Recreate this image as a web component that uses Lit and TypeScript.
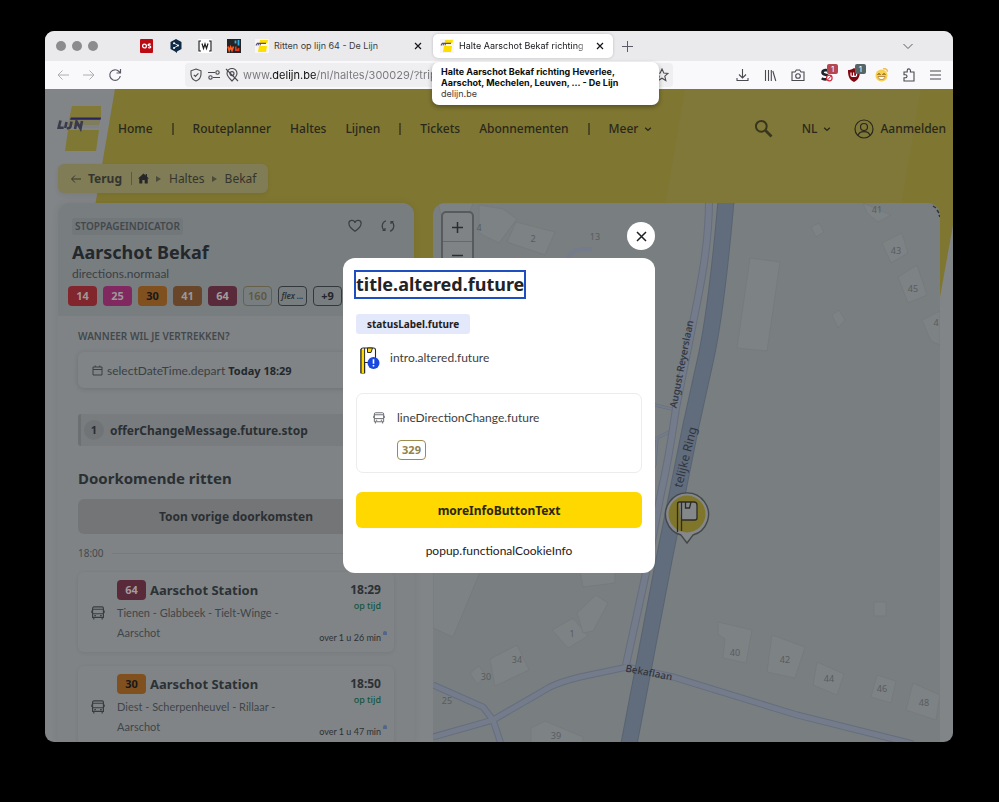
import { LitElement, html, css, svg } from "lit";
import { customElement, property } from "lit/decorators.js";
import { classMap } from "lit/directives/class-map.js";

interface Ride {
  line: string;
  tone: string;
  to: string;
  via: string;
  time: string;
  wait: string;
}

const LINES: { label: string; tone: string }[] = [
  { label: "14", tone: "red" },
  { label: "25", tone: "pink" },
  { label: "30", tone: "orange" },
  { label: "41", tone: "brown" },
  { label: "64", tone: "wine" },
  { label: "160", tone: "sand" },
  { label: "flex ...", tone: "flex" },
  { label: "+9", tone: "more" },
];

const RIDES: Ride[] = [
  { line: "64", tone: "wine", to: "Aarschot Station", via: "Tienen - Glabbeek - Tielt-Winge - Aarschot", time: "18:29", wait: "over 1 u 26 min" },
  { line: "30", tone: "orange", to: "Aarschot Station", via: "Diest - Scherpenheuvel - Rillaar - Aarschot", time: "18:50", wait: "over 1 u 47 min" },
];

const reset = css`
  *, *::before, *::after { box-sizing: border-box; }
  button { font: inherit; color: inherit; background: none; border: 0; padding: 0; margin: 0; cursor: pointer; }
  a { color: inherit; text-decoration: none; }
  h1, h2, h3, p, ul, ol { margin: 0; padding: 0; list-style: none; }
  svg { display: block; flex: none; }
  .light-text { font-family: Lato, "Noto Sans", sans-serif; }
`;

const lineBadge = css`
  .badge {
    display: inline-flex; align-items: center; justify-content: center; flex: none;
    width: 29px; height: 20px; border-radius: 4px; font-size: 11px; line-height: 16px; font-weight: 700;
    border: 1px solid transparent; white-space: nowrap;
  }
  .red { background: #82262d; color: #9b9899; }
  .pink { background: #822860; color: #9b9899; }
  .orange { background: #81501f; color: #17181a; }
  .brown { background: #694629; color: #9b9899; }
  .wine { background: #592a3a; color: #a09c9e; }
  .sand { border-color: #68614a; color: #5f583c; font-weight: 600; }
  .flex { border-color: #33383d; color: #2d3237; font-size: 8px; font-style: italic; font-weight: 600; }
  .more { border-color: #33383d; color: #23272b; }
  .olive { border-color: #9c8c4e; color: #92834a; }
`;

const busIcon = (size: number) => svg`
  <svg width=${size} height=${size} viewBox="0 0 16 16" fill="none" stroke="currentColor" stroke-width="1.3" aria-hidden="true">
    <path d="M3.4 1h9.2a1.6 1.6 0 0 1 1.6 1.6V13H1.8V2.600A1.600 1.600 0 0 1 3.400 1zM1.800 3.700h12.400M1.800 8.800h12.400M3.200 13v2.300M12.800 13v2.300M1 5v3M15 5v3"/>
    <path d="M3.800 11h1.800M10.400 11h1.800" stroke-width="1.600"/>
  </svg>`;

const chevron = svg`
  <svg width="8" height="8" viewBox="0 0 8 8" fill="none" stroke="currentColor" stroke-width="1.400" aria-hidden="true"><path d="M1.200 2.800 4 5.400l2.800-2.600"/></svg>`;

const lijnIcon = svg`
  <svg width="14" height="14" viewBox="0 0 14 14" aria-hidden="true">
    <rect width="14" height="14" fill="#f7f5f6"/>
    <path d="M5 1h8l-.6 3H4.600zM4 7h8l-1 6H3z" fill="#ffdf00"/>
    <path d="M1 6.400 2 4.600M3 6.400l.6-1.800M5 6.400l.5-1.800M2 4.400h9" stroke="#544e7c" stroke-width="1.100"/>
  </svg>`;

@customElement("browser-chrome")
export class BrowserChrome extends LitElement {
  static styles = [reset, css`
    :host { display: block; position: relative; z-index: 3; font: 400 9px/12px Inter, "Liberation Sans", sans-serif; color: #3c3c40; }
    .tabs { display: flex; align-items: center; height: 30px; background: #eaeaed; padding: 0 39px 0 11px; }
    .lights { display: flex; gap: 6px; margin-right: 34px; }
    .light { width: 10px; height: 10px; border-radius: 50%; background: #8c8c8e; }
    .pin { width: 29px; height: 24px; display: grid; place-items: center; }
    .tab { position: relative; display: flex; align-items: center; gap: 5px; height: 24px; padding: 0 7px; border-radius: 5px; flex: 0 1 183px; min-width: 0; font-size: 9px; }
    .tab.active { background: #fff; color: #15141a; flex-basis: 180px; margin-left: 2px; box-shadow: 0 0 3px #0003; }
    .title { flex: 1; min-width: 0; white-space: nowrap; overflow: hidden; }
    .active .title { mask-image: linear-gradient(to right, #000 90%, #0000); }
    .close { width: 12px; height: 12px; display: grid; place-items: center; color: #15141a; }
    .plus { margin-left: 9px; }
    .list { margin-left: auto; }
    .tip { position: absolute; top: 28px; left: -1px; width: 227px; padding: 4px 9px 6px; border-radius: 7px; background: #fff; box-shadow: 0 2px 5px #0005; line-height: 11px; color: #3c3c40; font-size: 9px; }
    .tip strong { display: block; color: #0c0c0d; font-weight: 700; }
    .bar { display: flex; align-items: center; height: 28px; background: #f9f9fb; padding: 0 12px 0 11px; gap: 12px; }
    .nav { display: flex; gap: 12px; color: #5b5b66; }
    .off { color: #aeaeb3; }
    .url { display: flex; align-items: center; gap: 4px; height: 24px; background: #efeff1; border-radius: 4px; padding: 0 4px; margin-left: 51px; flex: 0 1 488px; min-width: 0; color: #4a4a50; }
    .address {
      flex: 1; min-width: 0; border: 0; outline: 0; padding: 0; margin: 0 4px 0 0; font: 400 11px/16px Inter, "Liberation Sans", sans-serif;
      background: linear-gradient(to right, #77777c 27px, #0c0c0d 27px 73px, #77777c 73px); -webkit-background-clip: text; background-clip: text; color: transparent;
    }
    .tools { display: flex; align-items: center; justify-content: space-between; margin-left: auto; flex: 0 0 205px; color: #4a4a50; }
    .tool { position: relative; display: grid; }
    .count { position: absolute; left: 7px; top: -4px; width: 11px; height: 10px; border-radius: 2px; font-size: 8px; line-height: 10px; text-align: center; color: #fff; background: #b34850; }
    .count.teal { background: #566; }
  `];

  render() {
    const x = svg`<svg width="8" height="8" viewBox="0 0 8 8" stroke="currentColor" stroke-width="1.200"><path d="m1 1 6 6M7 1 1 7"/></svg>`;
    return html`
      <div class="tabs">
        <div class="lights"><i class="light"></i><i class="light"></i><i class="light"></i></div>
        <button class="pin" aria-label="OS"><svg width="14" height="14" viewBox="0 0 14 14"><rect width="13" height="14" rx="1" fill="#bd0b14"/><g fill="none" stroke="#fff" stroke-width="1.300"><circle cx="4.500" cy="7" r="1.900"/><path d="M10.600 5.300c-1-.5-2.500-.4-2.500.6 0 1.200 2.600.8 2.600 2 0 1-1.600 1.200-2.700.6"/></g></svg></button>
        <button class="pin" aria-label="Pakket"><svg width="14" height="14" viewBox="0 0 14 14"><path d="m7 0 5.500 3v7L8 12.500V14l-2-1.500L1.500 10V3z" fill="#0f2b46"/><path d="m5 4 4 2.500L5 9" stroke="#cdd6df" fill="none"/><g fill="#fff"><circle cx="5" cy="4.200" r="1"/><circle cx="9" cy="6.500" r="1"/><circle cx="5" cy="9" r="1"/></g></svg></button>
        <button class="pin" aria-label="W"><svg width="14" height="14" viewBox="0 0 14 14"><rect width="14" height="14" fill="#fff"/><path d="M3 2H1v10h2M11 2h2v10h-2M4 4.500l1.500 5L7 5l1.500 4.500 1.500-5" stroke="#222" fill="none" stroke-width="1.200"/></svg></button>
        <button class="pin" aria-label="WL"><svg width="14" height="14" viewBox="0 0 14 14"><rect width="14" height="14" fill="#222428"/><path d="M1 7.500l1.200 4L3.600 8 5 11.500l1.500-4" stroke="#ff5a1f" stroke-width="1.700" fill="none"/><path d="M8.500 1.500v3M11.500 1v5.500" stroke="#35a7d8" stroke-width="1.800"/><path d="M8.800 7.500v3.700h2.700V9" stroke="#d9381e" stroke-width="1.700" fill="none"/></svg></button>
        <div class="tab">${lijnIcon}<span class="title">Ritten op lijn 64 - De Lijn</span><button class="close" aria-label="Sluiten">${x}</button></div>
        <div class="tab active">${lijnIcon}<span class="title">Halte Aarschot Bekaf richting</span><button class="close" aria-label="Sluiten">${x}</button>
          <div class="tip" role="tooltip"><strong>Halte Aarschot Bekaf richting Heverlee, Aarschot, Mechelen, Leuven, ... - De Lijn</strong>delijn.be</div>
        </div>
        <button class="plus" aria-label="Nieuw tabblad"><svg width="11" height="11" viewBox="0 0 11 11" stroke="#5b5b66"><path d="M5.500 0v11M0 5.500h11"/></svg></button>
        <button class="list" aria-label="Tabbladen"><svg width="12" height="12" viewBox="0 0 12 12" stroke="#5b5b66" fill="none"><path d="m1.500 4 4.500 4.500L10.500 4"/></svg></button>
      </div>
      <div class="bar">
        <div class="nav">
          <button class="off" aria-label="Terug"><svg width="14" height="14" viewBox="0 0 14 14" fill="none" stroke="currentColor"><path d="M13 7H2M6.500 2.500 2 7l4.500 4.500"/></svg></button>
          <button class="off" aria-label="Vooruit"><svg width="14" height="14" viewBox="0 0 14 14" fill="none" stroke="currentColor"><path d="M1 7h11M7.500 2.500 12 7l-4.500 4.500"/></svg></button>
          <button aria-label="Herladen"><svg width="14" height="14" viewBox="0 0 14 14" fill="none" stroke="currentColor" stroke-width="1.200"><path d="M12.300 8A5.300 5.300 0 1 1 11 3.500L12.500 5M12.500 1v4h-4"/></svg></button>
        </div>
        <div class="url">
          <svg width="14" height="14" viewBox="0 0 14 14" fill="none" stroke="currentColor" stroke-width="1.100"><path d="M7 1l5 1.800V6c0 3.500-2 5.800-5 7-3-1.200-5-3.500-5-7V2.800zM4.800 6.800l1.600 1.600 3-3"/></svg>
          <svg width="14" height="14" viewBox="0 0 14 14" fill="none" stroke="currentColor" stroke-width="1.100"><path d="M1 4.500h7M13 9.500H6"/><circle cx="10.500" cy="4.500" r="1.700"/><circle cx="3.500" cy="9.500" r="1.700"/></svg>
          <svg width="14" height="14" viewBox="0 0 14 14" fill="none" stroke="currentColor" stroke-width="1.100"><path d="M7 13C4 10 2 8 2 5.500a5 5 0 0 1 10 0C12 8 10 10 7 13zM1 1l12 12"/><circle cx="7" cy="5.600" r="2"/></svg>
          <input class="address" aria-label="Adres" value="www.delijn.be/nl/haltes/300029/?trip" />
          <svg width="14" height="14" viewBox="0 0 14 14" fill="none" stroke="currentColor" stroke-width="1.100"><path d="m7 1 1.800 4 4.200.4-3.200 2.800 1 4.300L7 10.200 3.200 12.500l1-4.300L1 5.400 5.200 5z"/></svg>
        </div>
        <div class="tools">
          <button class="tool" aria-label="Downloads"><svg width="13" height="13" viewBox="0 0 13 13" fill="none" stroke="currentColor" stroke-width="1.100"><path d="M6.500 0v8.500M3 5.500 6.500 9 10 5.500M1 9v2.500h11V9"/></svg></button>
          <button class="tool" aria-label="Bibliotheek"><svg width="13" height="13" viewBox="0 0 13 13" fill="none" stroke="currentColor" stroke-width="1.100"><path d="M1.500 1v11M4.500 1v11M7.300 1v11M8.800 2l3 10"/></svg></button>
          <button class="tool" aria-label="Schermafbeelding"><svg width="14" height="13" viewBox="0 0 14 13" fill="none" stroke="currentColor" stroke-width="1.100"><path d="M1 3h3l1.300-2h3.400L10 3h3v8.500H1z"/><circle cx="7" cy="7" r="2.300"/></svg></button>
          <button class="tool" aria-label="Scripts"><svg width="13" height="14" viewBox="0 0 13 14" fill="none"><path d="M9 3.200C7.500 1.600 2.500 1.600 2.500 4.500 2.500 7.500 8.500 6 8.500 9c0 2.700-4.500 3-6.700 1.200" stroke="#20232b" stroke-width="2.600"/><circle cx="9.300" cy="10" r="2.800" stroke="#d8263c" fill="#fff" stroke-width="1.200"/><path d="m7.500 12 3.600-4" stroke="#d8263c"/></svg><span class="count">1</span></button>
          <button class="tool" aria-label="Blokkeren"><svg width="12" height="14" viewBox="0 0 12 14"><path d="M6 0c2 1.500 4 2 6 2 0 6-1 9.500-6 12C1 11.500 0 8 0 2c2 0 4-.5 6-2z" fill="#800610"/><path d="M3 4.500v2.800c0 1.500 2.600 1.500 2.600 0V4.500m0 2.800c0 1.500 3 1.500 3 0V5" stroke="#fff" stroke-width="1.200" fill="none"/></svg><span class="count teal">1</span></button>
          <button class="tool" aria-label="Emoji"><svg width="13" height="14" viewBox="0 0 13 14" fill="none"><circle cx="6.500" cy="7.500" r="6" fill="#f9cf4e"/><path d="M8 0.800c3-.5 4.500 1 4.500 3" stroke="#f0bd55" stroke-width="1.500"/><path d="M2.500 6.500q1.500-1.500 3 0M7.500 6.500q1.500-1.500 3 0" stroke="#5d4517"/><path d="M3 8.500h7c0 4-7 4-7 0z" fill="#fff" stroke="#a56b1e" stroke-width=".7"/></svg></button>
          <button class="tool" aria-label="Extensies"><svg width="13" height="14" viewBox="0 0 13 14" fill="none" stroke="currentColor" stroke-width="1.100"><path d="M2 4h3.200V2.500a1.600 1.600 0 0 1 3.200 0V4H12v9H2v-3.200h1.500a1.500 1.500 0 0 0 0-3H2z"/></svg></button>
          <button class="tool" aria-label="Menu"><svg width="11" height="12" viewBox="0 0 11 12" stroke="currentColor" stroke-width="1.100"><path d="M0 2h11M0 6h11M0 10h11"/></svg></button>
        </div>
      </div>`;
  }
}

@customElement("site-header")
export class SiteHeader extends LitElement {
  static styles = [reset, css`
    :host { display: block; color: #29281c; }
    .nav { display: flex; align-items: center; gap: 19px; height: 75px; padding: 4px 7px 0 12px; font-size: 12px; line-height: 16px; font-weight: 500; }
    .logo { margin: 0 -2px 0 0; }
    .sep { width: 2px; height: 12px; background: #4a4722; }
    .drop { display: inline-flex; align-items: center; gap: 6px; }
    .search { margin-left: auto; color: #38361c; }
    .nav .lang { margin: 0 4px 0 10px; }
    .user { display: inline-flex; align-items: center; gap: 6px; }
    .crumbs { display: inline-flex; align-items: center; gap: 7px; height: 29px; margin-left: 13px; padding: 0 12px; border-radius: 6px; background: #807c55; box-shadow: 0 2px 5px #0001; font-size: 12px; line-height: 16px; color: #34352e; }
    .back { display: inline-flex; align-items: center; gap: 6px; font-weight: 700; }
    .rule { width: 1px; height: 13px; background: #5b5940; margin: 0 -1px 0 2px; }
  `];

  render() {
    const arrow = svg`<svg width="6" height="8" viewBox="0 0 6 8" aria-hidden="true"><path d="M0 1v6l5-3z" fill="#4b4b3c"/></svg>`;
    return html`
      <nav class="nav">
        <a class="logo" href="#" aria-label="De Lijn">
          <svg width="44" height="48" viewBox="0 0 44 48" aria-hidden="true">
            <path d="M15 1h31l-4 19H11z" fill="#827a36"/><path d="M11 25h31l-3 21H8z" fill="#7f7835"/>
            <path d="M0 15h42v8H0z" fill="#7d8081" opacity=".5"/>
            <path d="M14 12.500h30l-.5 2.200H13z" fill="#282460"/>
            <path d="m3.500 15.500-1.800 7.200h5M9.500 17l-1.300 6M14.500 16.500l-1 5c-.3 1.500-2 2-3.500 1.600M18 24l1.500-7.500 4 7 1.500-7.500" fill="none" stroke="#3a3a4c" stroke-width="2.600"/>
          </svg></a>
        <a href="#">Home</a><span class="sep"></span>
        <a href="#">Routeplanner</a><a href="#">Haltes</a><a href="#">Lijnen</a><span class="sep"></span>
        <a href="#">Tickets</a><a href="#">Abonnementen</a><span class="sep"></span>
        <button class="drop">Meer ${chevron}</button>
        <button class="search" aria-label="Zoeken"><svg width="19" height="19" viewBox="0 0 19 19" fill="none" stroke="currentColor"><circle cx="7.300" cy="7.300" r="5.400" stroke-width="2"/><path d="m11.500 11.500 6 6" stroke-width="2.800"/></svg></button>
        <button class="drop lang">NL ${chevron}</button>
        <a class="user" href="#"><svg width="20" height="20" viewBox="0 0 20 20" fill="none" stroke="currentColor" stroke-width="1.200"><circle cx="10" cy="10" r="9"/><circle cx="10" cy="8" r="3.500"/><path d="M4 16.500c1-3.500 3.500-3.800 6-3.800s5 .3 6 3.800"/></svg>Aanmelden</a>
      </nav>
      <nav class="crumbs" aria-label="Kruimelpad">
        <a class="back" href="#"><svg width="12" height="12" viewBox="0 0 12 12" fill="none" stroke="currentColor"><path d="M11 6H2M5 2.500 1.500 6 5 9.500"/></svg>Terug</a>
        <span class="rule"></span>
        <a href="#" aria-label="Start"><svg width="11" height="11" viewBox="0 0 11 11"><path d="M5.500.5 0 5.500h1.300V10.500h3V7h2.400v3.500h3v-5H11L9 3.700V1H7.700v1.500z" fill="#26272a"/></svg></a>
        ${arrow}<a href="#">Haltes</a>${arrow}<span>Bekaf</span>
      </nav>`;
  }
}

@customElement("ride-card")
export class RideCard extends LitElement {
  @property({ attribute: false }) ride!: Ride;

  static styles = [reset, lineBadge, css`
    :host { display: flex; gap: 12px; padding: 7px 13px 5px; border-radius: 6px; background: #808486; box-shadow: 0 1px 4px #0001; height: 80px; color: #2c3135; }
    .bus { align-self: center; color: #373c40; }
    .main { flex: 1; min-width: 0; }
    .to { display: flex; align-items: center; gap: 4px; height: 22px; font-size: 13px; line-height: 20px; font-weight: 700; white-space: nowrap; }
    .via { font-size: 11px; line-height: 20px; max-width: 170px; margin-top: 2px; color: #404549; }
    .side { position: relative; display: flex; flex-direction: column; align-items: flex-end; width: 60px; white-space: nowrap; }
    .time { font-size: 12px; line-height: 22px; font-weight: 700; }
    .ok { font-size: 9px; line-height: 10px; color: #14553f; font-weight: 500; }
    .wait { margin-top: auto; font-size: 9px; line-height: 18px; }
    .live { position: absolute; right: -6px; bottom: 12px; width: 4px; height: 4px; background: #52658a; border-radius: 50% 50% 0 0; }
  `];

  render() {
    const r = this.ride;
    return html`
      <span class="bus">${busIcon(14)}</span>
      <div class="main">
        <h3 class="to"><span class=${classMap({ badge: true, [r.tone]: true })}>${r.line}</span>${r.to}</h3>
        <p class="via light-text">${r.via}</p>
      </div>
      <div class="side"><span class="time">${r.time}</span><span class="ok">op tijd</span><span class="wait light-text">${r.wait}</span><i class="live"></i></div>`;
  }
}

@customElement("stop-panel")
export class StopPanel extends LitElement {
  static styles = [reset, lineBadge, css`
    :host { display: block; border-radius: 12px 12px 0 0; background: #7f8385; color: #2a2f33; box-shadow: 0 0 8px #0001; overflow: hidden; }
    .head { height: 113px; padding: 14px 14px 0; background: #787d80; }
    .top { display: flex; align-items: center; height: 18px; gap: 19px; color: #3a3f43; }
    .tag { margin-right: auto; background: #72777a; border-radius: 3px; padding: 0 3px; font-size: 10px; line-height: 17px; font-weight: 600; color: #43484c; }
    .top .turn { margin-right: 5px; }
    .name { font-size: 18px; line-height: 26px; margin-top: 4px; font-weight: 700; color: #23282c; }
    .dir { font-size: 12px; line-height: 18px; color: #3a3f43; }
    .lines { display: flex; gap: 6px; margin: 3px -4px 0; }
    .body { padding: 11px 20px 0; }
    .ask { display: block; font-size: 10px; line-height: 18px; font-weight: 600; color: #43484c; }
    .when { display: flex; align-items: center; gap: 4px; width: 100%; height: 36px; margin-top: 7px; padding: 0 14px; border-radius: 6px; background: #808486; box-shadow: 0 1px 5px #0002; font-size: 12px; color: #3a3f43; }
    .when b { color: #23282c; font-family: "Noto Sans", sans-serif; font-size: 11px; }
    .notice { display: flex; align-items: center; gap: 6px; height: 32px; margin-top: 26px; padding-left: 3px; border-left: 3px solid #6d7072; border-radius: 3px; background: #797c7e; font-size: 12px; font-weight: 700; }
    .num { width: 20px; height: 20px; border-radius: 50%; background: #717476; text-align: center; font-size: 11px; line-height: 20px; }
    .sub { font-size: 15px; line-height: 22px; margin: 21px 0 10px; font-weight: 700; }
    .earlier { width: 100%; height: 35px; border-radius: 6px; background: #747576; font-size: 12px; font-weight: 700; }
    .hour { display: flex; align-items: center; gap: 8px; font-size: 10px; line-height: 14px; margin: 12px 0; color: #45494c; }
    .hour::after { content: ""; flex: 1; height: 1px; background: #767b7e; }
    .rides { display: grid; gap: 14px; }
  `];

  render() {
    return html`
      <header class="head">
        <div class="top">
          <span class="tag">STOPPAGEINDICATOR</span>
          <button aria-label="Favoriet"><svg width="14" height="14" viewBox="0 0 14 14" fill="none" stroke="currentColor" stroke-width="1.200"><path d="M7 12.300C3 9.500 1 7.500 1 5a3 3 0 0 1 6-1.200A3 3 0 0 1 13 5c0 2.500-2 4.500-6 7.300z"/></svg></button>
          <button class="turn" aria-label="Vernieuwen"><svg width="14" height="14" viewBox="0 0 14 14" fill="none" stroke="currentColor" stroke-width="1.200"><path d="M5 1.800A5.500 5.500 0 0 0 3.500 11.500M1.500 11.500h2.500V9M9 12.200a5.500 5.500 0 0 0 1.500-9.700M12.500 2.500H10V5"/></svg></button>
        </div>
        <h1 class="name">Aarschot Bekaf</h1>
        <p class="dir light-text">directions.normaal</p>
        <div class="lines">${LINES.map((l) => html`<span class=${classMap({ badge: true, [l.tone]: true })}>${l.label}</span>`)}</div>
      </header>
      <div class="body">
        <span class="ask" id="ask">WANNEER WIL JE VERTREKKEN?</span>
        <button class="when light-text" aria-describedby="ask"><svg width="11" height="11" viewBox="0 0 11 11" fill="none" stroke="currentColor"><path d="M1 2h9v8H1zM1 4.500h9M3.200.5V2M7.800.5V2"/></svg><span>selectDateTime.depart <b>Today 18:29</b></span></button>
        <div class="notice"><span class="num">1</span>offerChangeMessage.future.stop</div>
        <h2 class="sub">Doorkomende ritten</h2>
        <button class="earlier">Toon vorige doorkomsten</button>
        <div class="hour">18:00</div>
        <div class="rides">${RIDES.map((r) => html`<ride-card .ride=${r}></ride-card>`)}</div>
      </div>`;
  }
}

const BUILDINGS = [
  "83,19 122,29 112,52 74,39", "46,2 70,6 84,16 66,40 46,30", "5,0 40,0 34,16 8,12", "317,55 347,59 334,148 304,145",
  "430,0 458,12 445,19 434,10", "378,24 386,20 391,29 383,34", "449,40 469,30 475,50 458,60", "465,74 484,62 494,92 475,100",
  "399,112 406,107 412,117 405,125", "489,117 507,108 507,142 498,138", "119,427 140,415 155,433 135,445",
  "144,410 163,392 175,400 160,428 150,430", "57,456 84,442 96,467 62,483", "37,470 46,463 54,474 44,481",
  "0,357 52,357 20,434 0,425", "145,357 182,357 182,380 150,384", "98,525 112,518 150,534 150,540 98,540",
  "285,419 319,427 313,460 290,455 292,436 285,431", "339,432 372,444 362,475 334,469", "384,459 411,471 404,492 380,482",
  "444,472 463,478 458,500 438,494", "480,480 507,492 503,517 473,507", "441,399 453,399 453,413 441,413",
];

const NUMBERS: [number, number, string][] = [
  [46, 24, "4"], [100, 35, "2"], [162, 33, "13"], [444, 6, "41"], [463, 47, "43"], [480, 85, "45"], [503, 119, "4"],
  [139, 430, "1"], [84, 456, "34"], [53, 473, "30"], [14, 497, "25"], [123, 532, "39"], [302, 449, "40"],
  [352, 456, "42"], [396, 475, "44"], [449, 485, "46"], [491, 499, "48"],
];

@customElement("stop-map")
export class StopMap extends LitElement {
  static styles = [reset, css`
    :host { display: block; position: relative; border-radius: 12px 12px 0 0; overflow: hidden; background: #797e80; }
    .canvas { position: absolute; inset: 0; width: 100%; height: 100%; }
    .edge { stroke: #666e7e; fill: none; }
    .road { stroke: #747b8a; fill: none; }
    .ring-edge { stroke: #586372; stroke-width: 17; fill: none; }
    .ring { stroke: #616d7d; stroke-width: 15; fill: none; }
    .house { fill: #7d8284; stroke: #75797b; stroke-width: .7; }
    .num { font-size: 9px; fill: #585c5f; text-anchor: middle; dominant-baseline: central; }
    .street { fill: #30353d; text-anchor: middle; dominant-baseline: central; }
    .small { font-size: 10px; font-weight: 500; }
    .large { font-size: 12px; }
    .zoom { position: absolute; top: 8px; left: 8px; width: 33px; border: 2px solid #575b5e; border-radius: 5px; background: #7f8385; }
    .step { display: grid; place-items: center; width: 100%; height: 28px; color: #2a2e31; }
    .step + .step { border-top: 1px solid #65696c; }
  `];

  render() {
    const ring = "M293 -2C288 55 282 115 272 159C265 190 262 205 258 222L231 357L196 541";
    const lane = "M276 -2C276 40 268 80 261 115L243 205C238 240 236 255 228 290L213 370L193 462";
    const minor = "M0 534L60 517L117 484C125 480 135 477 147 474L194 464L240 474L364 512L480 541M0 482L50 504L60 517L68 541";
    const links = "M200 195L222 202L243 207M200 241L222 236L238 228M224 236L222 262L214 280";
    return html`
      <svg class="canvas" viewBox="0 0 507 539" preserveAspectRatio="xMinYMin slice" role="img" aria-label="Kaart">
        ${BUILDINGS.map((p) => svg`<polygon class="house" points=${p}/>`)}
        <path class="edge" stroke-width="3" d=${links}/><path class="road" stroke-width="2" d=${links}/>
        <path class="edge" stroke-width="8" d=${lane}/><path class="edge" stroke-width="7" d=${minor}/>
        <path class="road" stroke-width="6" d=${lane}/><path class="road" stroke-width="5" d=${minor}/>
        <path d="M135 56C138 47 144 46 159 46" class="road" stroke-width="4"/>
        <path class="ring-edge" d=${ring}/><path class="ring" d=${ring}/>
        ${NUMBERS.map(([x, y, t]) => svg`<text class="num" x=${x} y=${y}>${t}</text>`)}
        <text class="street small" transform="translate(248 161) rotate(-79)">August Reyerslaan</text>
        <text class="street large" transform="translate(252 254) rotate(-76)">telijke Ring</text>
        <text class="street small" transform="translate(216 469) rotate(11)">Bekaflaan</text>
        <path d="M500 3l3 2m1 2 2 3m0 2 1 2" stroke="#30353d" stroke-width="1.500"/>
        <path d="M254 340l-6-8a21.500 21.500 0 1 1 12 0z" fill="#85888a" stroke="#43474a" stroke-width="1.400"/>
        <circle cx="254" cy="311" r="18.500" fill="#80762b"/>
        <path d="M246 299h15q3 0 3 3v13q0 2-2 2h-13v12" fill="#85888a"/>
        <path d="M244.500 329v-28q0-2 2-2h14.500q3 0 3 3v13q0 2-2 2h-13.500v11M248.500 299v18M252.500 299v6h4l1.500-6" fill="none" stroke="#2c2b24" stroke-width="1.300"/>
      </svg>
      <div class="zoom">
        <button class="step" aria-label="Inzoomen"><svg width="11" height="11" viewBox="0 0 11 11" stroke="currentColor" stroke-width="1.500"><path d="M5.500 0v11M0 5.500h11"/></svg></button>
        <button class="step" aria-label="Uitzoomen"><svg width="11" height="11" viewBox="0 0 11 11" stroke="currentColor" stroke-width="1.500"><path d="M0 5.500h11"/></svg></button>
      </div>`;
  }
}

@customElement("change-dialog")
export class ChangeDialog extends LitElement {
  static styles = [reset, lineBadge, css`
    :host { position: absolute; inset: 0; display: grid; place-items: center; z-index: 2; }
    .dialog { position: relative; width: 312px; padding: 12px 13px; border-radius: 12px; background: #fff; color: #1f2023; }
    .close { position: absolute; right: 0; top: -36px; width: 28px; height: 28px; border-radius: 50%; background: #fff; display: grid; place-items: center; }
    .title { display: inline-block; font-size: 18px; line-height: 25px; margin: 2px 0 0; outline: 2px solid #1d4fc0; font-weight: 700; color: #222326; }
    .status { display: block; width: fit-content; margin-top: 17px; padding: 0 11px; border-radius: 3px; background: #e4e8fb; font-size: 10px; line-height: 20px; font-weight: 700; }
    .intro { display: flex; gap: 10px; margin-top: 13px; padding-left: 4px; font-size: 12px; line-height: 22px; color: #3c3e42; }
    .card { display: grid; grid-template-columns: 12px 1fr; gap: 12px 12px; margin-top: 19px; padding: 13px 16px 12px; border: 1px solid #ececee; border-radius: 7px; font-size: 12px; line-height: 21px; color: #3c3e42; }
    .card .bus { align-self: center; color: #6a6c70; }
    .card .badge { grid-column: 2; font-family: "Noto Sans", sans-serif; }
    .more { display: block; width: 100%; height: 36px; margin-top: 19px; border-radius: 6px; background: #ffd800; font-size: 12px; font-weight: 700; color: #2b2610; }
    .cookie { display: block; text-align: center; font-size: 12px; line-height: 18px; margin: 14px 0 1px; }
  `];

  render() {
    return html`
      <div class="dialog" role="dialog" aria-modal="true" aria-labelledby="title">
        <button class="close" aria-label="Sluiten"><svg width="11" height="11" viewBox="0 0 11 11" stroke="#1f2023" stroke-width="1.500"><path d="m1 1 9 9M10 1 1 10"/></svg></button>
        <h2 class="title" id="title">title.altered.future</h2>
        <span class="status">statusLabel.future</span>
        <div class="intro light-text">
          <svg width="20" height="27" viewBox="0 0 20 27" fill="none" aria-hidden="true">
            <path d="M4.600 15.500h9q1.900 0 1.900-2V3q0-2-2-2H3Q1 1 1 3v23h3.600z" fill="#fff" stroke="#2b2b22" stroke-width="1.100"/>
            <path d="M1.500 2.500h2.600V26H1.500z" fill="#ffd800"/><path d="M1 26V2M4.600 1v25" stroke="#2b2b22" stroke-width="1"/>
            <path d="M7.500 1v4.500h3.500L12.500 1z" fill="#ffd800" stroke="#2b2b22"/>
            <circle cx="13.500" cy="16" r="6" fill="#1848e0"/><path d="M13.500 12.300v4.400M13.500 18v1.500" stroke="#fff" stroke-width="1.600"/>
          </svg>
          <p>intro.altered.future</p>
        </div>
        <div class="card light-text">
          <span class="bus">${busIcon(12)}</span><span>lineDirectionChange.future</span>
          <span class="badge olive">329</span>
        </div>
        <button class="more">moreInfoButtonText</button>
        <span class="cookie light-text">popup.functionalCookieInfo</span>
      </div>`;
  }
}

@customElement("app-root")
export class AppRoot extends LitElement {
  static styles = [reset, css`
    :host { display: block; box-sizing: border-box; height: 100vh; padding: 31px 46px 60px 45px; background: #000; font-family: "Noto Sans", "Open Sans", sans-serif; }
    .window { display: flex; flex-direction: column; height: 100%; border-radius: 9px; overflow: hidden; background: #818587; }
    .page { position: relative; flex: 1; min-height: 0; display: flex; flex-direction: column; overflow: hidden; }
    .shape { position: absolute; inset: 0; width: 100%; height: 100%; }
    site-header, .content { position: relative; }
    .content { flex: 1; min-height: 0; display: grid; grid-template-columns: minmax(0, 356fr) minmax(0, 507fr); gap: 19px; padding: 10px 13px 0 13px; }
  `];

  render() {
    return html`
      <div class="window">
        <browser-chrome></browser-chrome>
        <main class="page">
          <svg class="shape" viewBox="0 0 908 653" preserveAspectRatio="none" aria-hidden="true">
            <path d="M70 0H908V136L895 208L874 311H17z" fill="#7f7631"/>
            <path d="M640 0H876L823 311H587z" fill="#807839"/>
          </svg>
          <site-header></site-header>
          <div class="content"><stop-panel></stop-panel><stop-map></stop-map></div>
          <change-dialog></change-dialog>
        </main>
      </div>`;
  }
}
